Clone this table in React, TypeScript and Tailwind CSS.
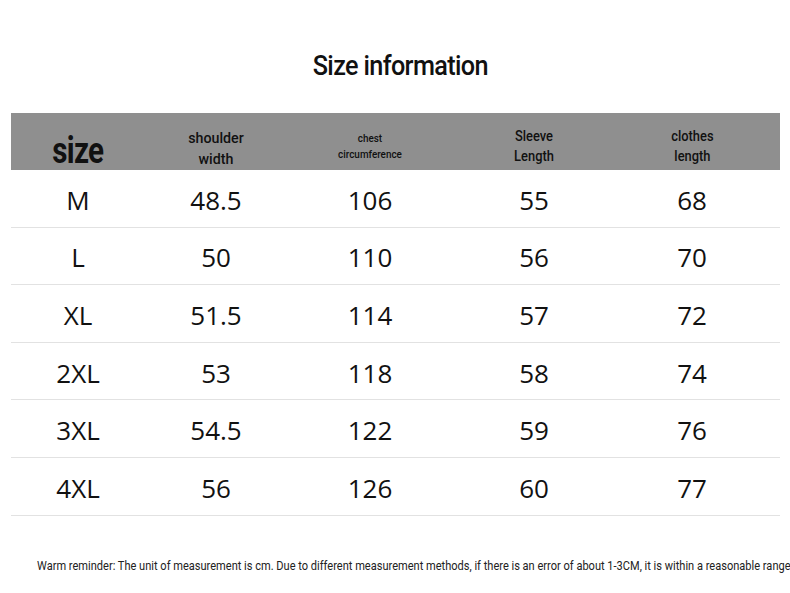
import React from "react";

const rows = [
  ["M", "48.5", "106", "55", "68"],
  ["L", "50", "110", "56", "70"],
  ["XL", "51.5", "114", "57", "72"],
  ["2XL", "53", "118", "58", "74"],
  ["3XL", "54.5", "122", "59", "76"],
  ["4XL", "56", "126", "60", "77"],
];

const cols = "grid grid-cols-[134px_142px_166px_162px_164px]";
const narrow = { fontFamily: '"Liberation Sans Narrow", "Roboto", sans-serif' };

const App: React.FC = () => {
  return (
    <div className="w-[790px] h-[593px] bg-white overflow-hidden relative" style={narrow}>
      <div className="pt-[48px] pl-[10px] text-center">
        <h1 className="inline-block scale-x-[0.9] text-[28px] leading-[36px] font-medium text-[#111] tracking-tight">
          Size information
        </h1>
      </div>

      <div className="ml-[11px] mt-[29px] w-[769px]">
        {/* Header */}
        <div className={`${cols} h-[57px] bg-[#8f8f8f] text-[#111] items-center text-center font-medium`}>
          <div className="pt-[19px]">
            <span className="inline-block scale-x-[0.8] text-[37px] font-bold leading-none tracking-tight">size</span>
          </div>
          <div className="text-[15px] leading-[21px] pt-[14px] scale-x-[0.95]">
            shoulder
            <br />
            width
          </div>
          <div className="text-[11px] leading-[16px] pt-[10px] scale-x-[0.9]">
            chest
            <br />
            circumference
          </div>
          <div className="text-[14px] leading-[20px] pt-[9px] scale-x-[0.92]">
            Sleeve
            <br />
            Length
          </div>
          <div className="text-[14px] leading-[20px] pt-[9px] pr-[10px] scale-x-[0.92]">
            clothes
            <br />
            length
          </div>
        </div>

        {/* Rows */}
        {rows.map((r) => (
          <div
            key={r[0]}
            className={`${cols} h-[57.6px] border-b border-[#e2e2e2] items-center text-center text-[26px] text-[#111]`}
            style={{ fontFamily: '"Open Sans", "Noto Sans", sans-serif' }}
          >
            {r.map((c, i) => (
              <div key={i} className={`pt-[4px] ${i === 4 ? "pr-[10px]" : ""}`}>
                {c}
              </div>
            ))}
          </div>
        ))}
      </div>

      <p className="absolute left-[37px] top-[556px] whitespace-nowrap origin-left scale-x-[0.85] text-[13px] text-[#222]">
        Warm reminder: The unit of measurement is cm. Due to different measurement methods, if there is an error of about 1-3CM, it is within a reasonable range
      </p>
    </div>
  );
};

export default App;
